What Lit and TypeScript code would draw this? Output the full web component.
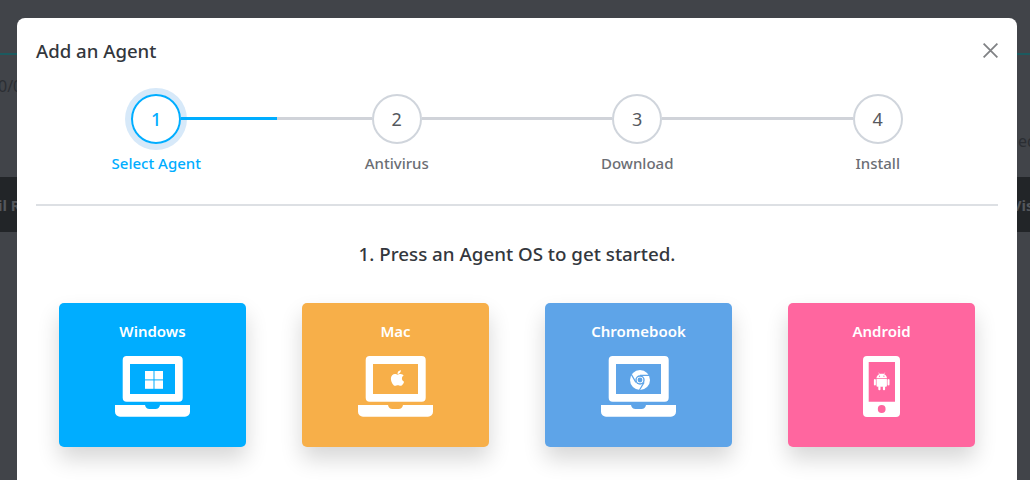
import { LitElement, html, css, svg } from "lit";
import { customElement } from "lit/decorators.js";

const laptop = (logo: unknown) => html`<svg class="icon" width="75" height="61" viewBox="0 0 75 61">
  <path fill="#fff" fill-rule="evenodd" d="M11.7 0h52a4 4 0 0 1 4 4v37.7a4 4 0 0 1-4 4h-52a4 4 0 0 1-4-4V4a4 4 0 0 1 4-4zM15 8v30h45V8z"/>
  <path fill="#fff" d="M0 49h30c.6 2.6 2 4 4.5 4h6c2.500 0 3.900-1.400 4.500-4h30v6.700a5 5 0 0 1-5 5H5a5 5 0 0 1-5-5z"/>
  ${logo}
</svg>`;

const windowsLogo = svg`<g fill="#fff">
  <rect x="30" y="15" width="8.500" height="8.400"/><rect x="39.500" y="15" width="8.500" height="8.400"/>
  <rect x="30" y="24.400" width="8.500" height="8.400"/><rect x="39.500" y="24.400" width="8.500" height="8.400"/>
</g>`;

const appleLogo = svg`<svg x="32" y="13" width="15" height="18" viewBox="0 0 384 512"><path fill="#fff" d="M318.700 268.700c-.2-36.700 16.400-64.400 50-84.800-18.800-26.900-47.200-41.700-84.700-44.600-35.500-2.800-74.300 20.700-88.500 20.700-15 0-49.400-19.700-76.400-19.700C63.300 141.200 4 184.800 4 273.500q0 39.300 14.400 81.200c12.800 36.700 59 126.700 107.200 125.200 25.200-.6 43-17.900 75.800-17.900 31.800 0 48.300 17.900 76.400 17.900 48.600-.7 90.400-82.500 102.600-119.300-65.200-30.700-61.700-90-61.700-91.900zm-56.600-164.200c27.300-32.400 24.800-61.900 24-72.500-24.100 1.400-52 16.400-67.900 34.900-17.500 19.800-27.800 44.300-25.600 71.900 26.100 2 49.900-11.400 69.500-34.300z"/></svg>`;

const chromeLogo = svg`<g>
  <circle cx="39" cy="24" r="10" fill="#fff"/>
  <circle cx="39" cy="24" r="4.700" fill="#5ea4e8"/>
  <circle cx="39" cy="24" r="3.300" fill="#fff"/>
  <circle cx="39" cy="24" r="2.400" fill="#5ea4e8"/>
  <path d="M39 19.300h9.300M34.900 26.400 30.300 18.400M43.100 26.400 38.500 34" stroke="#5ea4e8" stroke-width="1.200" fill="none"/>
</g>`;

const phone = html`<svg class="icon" width="37" height="61" viewBox="0 0 37 61">
  <path fill="#fff" fill-rule="evenodd" d="M4 0h29a4 4 0 0 1 4 4v53a4 4 0 0 1-4 4H4a4 4 0 0 1-4-4V4a4 4 0 0 1 4-4zM5.700 6v39.700H32V6z"/>
  <circle cx="18.700" cy="53" r="3.900" fill="#ff669f"/>
  <g fill="#fff">
    <path d="M13.500 22.200c0-2.600 2.200-4.500 5.200-4.500s5.200 1.900 5.200 4.500z"/>
    <path d="M13.500 23h10.400v6.800a1 1 0 0 1-1 1h-8.400a1 1 0 0 1-1-1z"/>
    <rect x="10.900" y="23" width="2" height="6.400" rx="1"/>
    <rect x="24.500" y="23" width="2" height="6.400" rx="1"/>
    <rect x="15.300" y="30" width="2.200" height="4.300" rx="1"/>
    <rect x="19.900" y="30" width="2.200" height="4.300" rx="1"/>
    <path d="M15.700 16.700 16.700 18.300M21.700 16.700 20.700 18.300" stroke="#fff" stroke-width=".6"/>
  </g>
  <circle cx="16.500" cy="20.200" r=".6" fill="#ff669f"/><circle cx="20.900" cy="20.200" r=".6" fill="#ff669f"/>
</svg>`;

const steps = ["Select Agent", "Antivirus", "Download", "Install"];
const cards = [
  { name: "Windows", cls: "win", icon: laptop(windowsLogo) },
  { name: "Mac", cls: "mac", icon: laptop(appleLogo) },
  { name: "Chromebook", cls: "chrome", icon: laptop(chromeLogo) },
  { name: "Android", cls: "android", icon: phone },
];

@customElement("app-root")
export class AppRoot extends LitElement {
  static styles = css`
    :host {
      display: block;
      width: 1030px;
      height: 480px;
      position: relative;
      overflow: hidden;
      font-family: "Noto Sans", sans-serif;
      background: #414449;
    }
    .page {
      height: 480px;
      display: flex;
      flex-direction: column;
      color: #2b2e33;
    }
    .rule {
      margin-top: 53px;
      height: 2px;
      background: #1c5a5f;
      flex: none;
    }
    .count {
      margin: 20px 0 0 -2px;
      font-size: 16px;
      line-height: 22px;
      height: 22px;
    }
    .ed {
      margin-top: 33px;
      height: 22px;
      line-height: 22px;
      font-size: 16px;
      margin-left: 1018px;
    }
    .band {
      margin-top: 25px;
      height: 55px;
      background: #222528;
      color: #54575c;
      display: flex;
      justify-content: space-between;
      align-items: center;
      font-weight: 700;
      font-size: 15px;
      white-space: nowrap;
    }
    .band .l { margin-left: -2px; }
    .band .r { margin-right: -22px; }
    .overlay {
      position: absolute;
      inset: 0;
      display: flex;
      padding-left: 17px;
      align-items: flex-start;
    }
    .modal {
      width: 1000px;
      height: 480px;
      margin-top: 18px;
      padding: 0 19px;
      box-sizing: border-box;
      background: #fff;
      border-radius: 8px;
      flex: none;
    }
    .head {
      height: 66px;
      display: flex;
      align-items: center;
      justify-content: space-between;
    }
    h2 {
      margin: 0 0 1px;
      font-size: 18.6px;
      font-weight: 500;
      color: #33373d;
      line-height: 26px;
    }
    .close { display: block; margin-bottom: 1px; }
    .steps {
      margin-top: 10px;
      display: grid;
      grid-template-columns: repeat(4, 1fr);
      padding-bottom: 30px;
      border-bottom: 2px solid #dde0e4;
    }
    .step {
      display: flex;
      flex-direction: column;
      align-items: stretch;
    }
    .track {
      display: flex;
      align-items: center;
      height: 50px;
    }
    .seg {
      flex: 1;
      height: 3px;
      margin-top: -1px;
      background: #d0d3d9;
    }
    .seg.none { background: transparent; }
    .seg.on { background: #00adff; }
    .dot {
      width: 50px;
      height: 50px;
      box-sizing: border-box;
      border: 2px solid #d0d5dc;
      border-radius: 50%;
      display: flex;
      align-items: center;
      justify-content: center;
      font-size: 18px;
      color: #55585e;
      flex: none;
    }
    .step.active .dot {
      border-color: #00adff;
      color: #00adff;
      font-weight: 500;
      box-shadow: 0 0 0 6px #d7e9f9;
    }
    .label {
      margin-top: 8px;
      text-align: center;
      font-size: 15px;
      line-height: 22px;
      font-weight: 500;
      color: #6b6e74;
    }
    .step.active .label { color: #00adff; }
    .prompt {
      margin: 34px 0 0;
      text-align: center;
      font-size: 18.75px;
      line-height: 28px;
      font-weight: 500;
      color: #33373d;
    }
    .cards {
      margin-top: 35px;
      padding: 0 23px;
      display: flex;
      justify-content: space-between;
    }
    .card {
      width: 187px;
      height: 144px;
      box-sizing: border-box;
      padding-top: 17px;
      border-radius: 5px;
      color: #fff;
      display: flex;
      flex-direction: column;
      align-items: center;
      box-shadow: 0 12px 22px rgba(0, 0, 0, 0.16);
    }
    .name {
      font-size: 15px;
      line-height: 22px;
      font-weight: 600;
    }
    .icon {
      display: block;
      margin-top: 14px;
    }
    .win { background: #00adff; }
    .mac { background: #f7af49; }
    .chrome { background: #5ea4e8; }
    .android { background: #ff669f; }
  `;

  render() {
    return html`
      <div class="page">
        <div class="rule"></div>
        <div class="count">0/0</div>
        <div class="ed">ed</div>
        <div class="band"><span class="l">il R</span><span class="r">Visits</span></div>
      </div>
      <div class="overlay">
        <div class="modal">
          <div class="head">
            <h2>Add an Agent</h2>
            <svg class="close" width="15" height="15" viewBox="0 0 15 15">
              <path d="M.6.6l13.800 13.800M14.400.6.6 14.400" stroke="#808285" stroke-width="1.800" fill="none"/>
            </svg>
          </div>
          <div class="steps">
            ${steps.map(
              (s, i) => html`<div class="step ${i === 0 ? "active" : ""}">
                <div class="track">
                  <div class="seg ${i === 0 ? "none" : ""}"></div>
                  <div class="dot">${i + 1}</div>
                  <div class="seg ${i === 3 ? "none" : i === 0 ? "on" : ""}"></div>
                </div>
                <div class="label">${s}</div>
              </div>`
            )}
          </div>
          <p class="prompt">1. Press an Agent OS to get started.</p>
          <div class="cards">
            ${cards.map(
              (c) => html`<div class="card ${c.cls}">
                <div class="name">${c.name}</div>
                ${c.icon}
              </div>`
            )}
          </div>
        </div>
      </div>
    `;
  }
}
